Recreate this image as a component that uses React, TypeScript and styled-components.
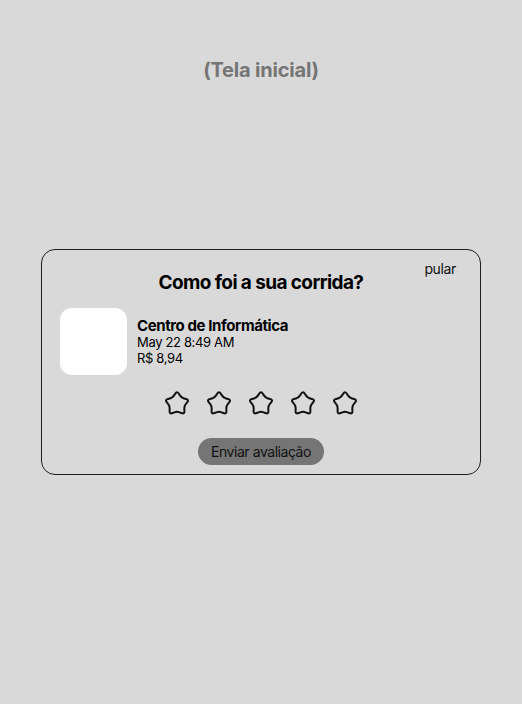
import React from "react";
import styled, { createGlobalStyle } from "styled-components";

const GlobalStyle = createGlobalStyle`
  html, body {
    margin: 0;
    padding: 0;
    background: #d9d9d9;
  }
  body {
    font-family: Inter, "Noto Sans", sans-serif;
    color: #000;
  }
`;

const Page = styled.div`
  width: 522px;
  min-height: 704px;
  display: flex;
  flex-direction: column;
  align-items: center;
  background: #d9d9d9;
`;

const ScreenLabel = styled.h1`
  margin: 58px 0 0;
  font-size: 20px;
  line-height: 24px;
  font-weight: 700;
  letter-spacing: -0.2px;
  color: #757575;
`;

const Card = styled.section`
  margin-top: 167px;
  width: 440px;
  box-sizing: border-box;
  border: 1px solid #1e1e1e;
  border-radius: 14px;
  padding: 10px 24px 9px 18px;
  display: flex;
  flex-direction: column;
`;

const TitleRow = styled.div`
  display: grid;
  grid-template-columns: 1fr auto 1fr;
  align-items: start;
  padding-left: 6px;
`;

const Title = styled.h2`
  grid-column: 2;
  margin: 11px 0 0;
  font-size: 19px;
  line-height: 23px;
  font-weight: 700;
  letter-spacing: -0.6px;
  white-space: nowrap;
`;

const SkipLink = styled.span`
  grid-column: 3;
  justify-self: end;
  font-size: 14px;
  line-height: 17px;
  font-weight: 400;
  letter-spacing: -0.35px;
  color: #111;
`;

const RideRow = styled.div`
  margin-top: 14px;
  display: flex;
  align-items: center;
  gap: 10px;
`;

const Thumb = styled.div`
  width: 67px;
  height: 67px;
  border-radius: 12px;
  background: #ffffff;
  flex: none;
`;

const RideInfo = styled.div`
  display: flex;
  flex-direction: column;
`;

const InfoLine = styled.span<{ $strong?: boolean }>`
  font-size: ${(p) => (p.$strong ? "15px" : "13px")};
  font-weight: ${(p) => (p.$strong ? 700 : 400)};
  letter-spacing: ${(p) => (p.$strong ? "-0.4px" : "-0.35px")};
  line-height: 16px;
  color: #000;
`;

const Stars = styled.div`
  margin-top: 14px;
  display: flex;
  justify-content: center;
  gap: 14px;
  padding-left: 6px;
`;

const StarButton = styled.button`
  width: 28px;
  height: 28px;
  padding: 0;
  border: none;
  background: none;
  display: flex;
  align-items: center;
  justify-content: center;
`;

const Footer = styled.div`
  margin-top: 21px;
  display: flex;
  justify-content: center;
  padding-left: 6px;
`;

const SubmitButton = styled.button`
  height: 27px;
  padding: 0 13px;
  border: none;
  border-radius: 14px;
  background: #757575;
  font-family: Inter, "Noto Sans", sans-serif;
  font-size: 14px;
  font-weight: 400;
  letter-spacing: -0.45px;
  color: #111;
`;

function roundedStarPath(
  cx: number,
  cy: number,
  R: number,
  r: number,
  tOuter: number,
  tInner: number
) {
  const pts: [number, number][] = [];
  for (let i = 0; i < 10; i++) {
    const a = ((-90 + i * 36) * Math.PI) / 180;
    const rad = i % 2 === 0 ? R : r;
    pts.push([cx + rad * Math.cos(a), cy + rad * Math.sin(a)]);
  }
  const f = (n: number) => n.toFixed(2);
  let d = "";
  for (let i = 0; i < 10; i++) {
    const t = i % 2 === 0 ? tOuter : tInner;
    const v = pts[i];
    const p = pts[(i + 9) % 10];
    const n = pts[(i + 1) % 10];
    const ax = v[0] + (p[0] - v[0]) * t;
    const ay = v[1] + (p[1] - v[1]) * t;
    const bx = v[0] + (n[0] - v[0]) * t;
    const by = v[1] + (n[1] - v[1]) * t;
    d += (i === 0 ? "M" : "L") + f(ax) + " " + f(ay) + " Q" + f(v[0]) + " " + f(v[1]) + " " + f(bx) + " " + f(by) + " ";
  }
  return d + "Z";
}

const STAR_D = roundedStarPath(14, 14.8, 13, 7.5, 0.42, 0.34);

function StarIcon() {
  return (
    <svg width="28" height="28" viewBox="0 0 28 28" fill="none">
      <path d={STAR_D} stroke="#111" strokeWidth="2" strokeLinejoin="round" />
    </svg>
  );
}

export default function App() {
  return (
    <>
      <GlobalStyle />
      <Page>
        <ScreenLabel>(Tela inicial)</ScreenLabel>
        <Card>
          <TitleRow>
            <Title>Como foi a sua corrida?</Title>
            <SkipLink>pular</SkipLink>
          </TitleRow>
          <RideRow>
            <Thumb />
            <RideInfo>
              <InfoLine $strong>Centro de Informática</InfoLine>
              <InfoLine>May 22 8:49 AM</InfoLine>
              <InfoLine>R$ 8,94</InfoLine>
            </RideInfo>
          </RideRow>
          <Stars>
            {[1, 2, 3, 4, 5].map((n) => (
              <StarButton key={n} aria-label={`${n} estrela`}>
                <StarIcon />
              </StarButton>
            ))}
          </Stars>
          <Footer>
            <SubmitButton>Enviar avaliação</SubmitButton>
          </Footer>
        </Card>
      </Page>
    </>
  );
}
